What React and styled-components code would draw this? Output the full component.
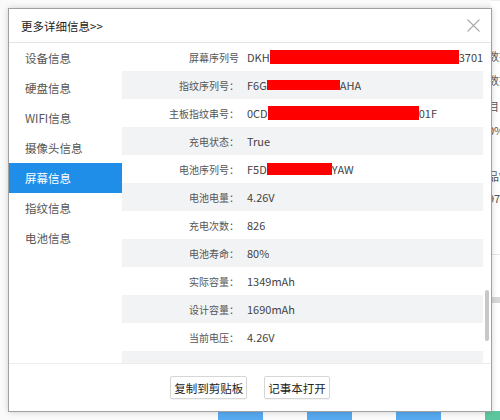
import React from 'react';
import styled, { createGlobalStyle } from 'styled-components';

const Global = createGlobalStyle`
  html, body { margin: 0; padding: 0; background: #fff; }
  body { font-family: "Noto Sans CJK SC", "Noto Sans", sans-serif; }
`;

const Desk = styled.div`
  position: relative;
  width: 500px;
  height: 420px;
  overflow: hidden;
  background: #fafafa;
`;

const SideColumn = styled.div`
  position: absolute;
  top: 0;
  right: 0;
  width: 9px;
  height: 411px;
  display: flex;
  flex-direction: column;
  padding-top: 44px;
  box-sizing: border-box;
  background: #fff;
  border-top: 1px solid #eee;
  overflow: hidden;
`;

const SideText = styled.div`
  height: ${({ h }) => h}px;
  font-size: 11px;
  line-height: ${({ h }) => h}px;
  color: #555;
  white-space: nowrap;
  text-indent: -3px;
`;

const SideRule = styled.div`
  height: ${({ h }) => h || 1}px;
  background: ${({ c }) => c || '#e6e6e6'};
  margin-top: ${({ mt }) => mt}px;
  flex: none;
`;

const Tiles = styled.div`
  position: absolute;
  left: 0;
  bottom: 0;
  width: 500px;
  height: 9px;
  display: flex;
`;

const Tile = styled.div`
  width: ${({ w }) => w}px;
  margin-left: ${({ ml }) => ml}px;
  background: ${({ c }) => c};
`;

const Dialog = styled.div`
  position: absolute;
  left: 8px;
  top: 8px;
  width: 484px;
  height: 404px;
  box-sizing: border-box;
  background: #fff;
  border: 1px solid #a0a0a0;
  box-shadow: 0 0 6px rgba(0, 0, 0, 0.18);
  display: flex;
  flex-direction: column;
`;

const Header = styled.div`
  height: 34px;
  box-sizing: border-box;
  flex: none;
  display: flex;
  align-items: center;
  justify-content: space-between;
  padding: 0 11px 0 12px;
  border-bottom: 1px solid #e4e4e4;
`;

const Title = styled.div`
  font-size: 11.5px;
  color: #222;
`;

const Close = styled.svg`
  width: 13px;
  height: 13px;
`;

const Body = styled.div`
  flex: 1;
  display: flex;
  min-height: 0;
`;

const Menu = styled.div`
  width: 113px;
  flex: none;
  display: flex;
  flex-direction: column;
`;

const MenuItem = styled.div`
  height: 30px;
  line-height: 30px;
  padding-left: 16px;
  font-size: 11.5px;
  color: ${({ active }) => (active ? '#fff' : '#555')};
  background: ${({ active }) => (active ? '#1e8ee8' : 'transparent')};
`;

const Content = styled.div`
  flex: 1;
  display: flex;
  overflow: hidden;
`;

const Rows = styled.div`
  width: 361px;
  flex: none;
  overflow: hidden;
`;

const Row = styled.div`
  height: 28px;
  display: flex;
  align-items: center;
  background: ${({ odd }) => (odd ? '#f2f3f5' : '#fff')};
`;

const Label = styled.div`
  width: 117px;
  flex: none;
  text-align: right;
  font-size: 10px;
  color: #555;
  white-space: nowrap;
`;

const Value = styled.div`
  padding-left: 8px;
  font-size: 11px;
  color: #444;
  white-space: nowrap;
  overflow: hidden;
  display: flex;
  align-items: center;
`;

const Mask = styled.span`
  display: inline-block;
  width: ${({ w }) => w}px;
  height: ${({ h }) => h || 14}px;
  background: #ff0000;
  flex: none;
`;

const Track = styled.div`
  width: 8px;
  flex: none;
  padding-top: 247px;
  box-sizing: border-box;
`;

const Thumb = styled.div`
  width: 4px;
  height: 51px;
  margin-left: 2px;
  border-radius: 2px;
  background: #c8c8c8;
`;

const Footer = styled.div`
  height: 48px;
  flex: none;
  border-top: 1px solid #ededed;
  display: flex;
  justify-content: center;
  align-items: flex-start;
  padding-top: 12px;
  box-sizing: border-box;
  gap: 17px;
`;

const Button = styled.button`
  height: 23px;
  padding: 0 3px;
  font-family: "Noto Sans CJK SC", sans-serif;
  font-size: 11.5px;
  color: #222;
  background: #fff;
  border: 1px solid #d6d6d6;
  border-radius: 2px;
  box-shadow: 0 1px 1px rgba(0, 0, 0, 0.05);
`;

const menu = ['设备信息', '硬盘信息', 'WIFI信息', '摄像头信息', '屏幕信息', '指纹信息', '电池信息'];

const rows = [
  ['屏幕序列号', <>DKH<Mask w={189} />37015</>],
  ['指纹序列号：', <>F6G<Mask w={73} h={10} />AHA</>],
  ['主板指纹串号：', <>0CD<Mask w={151} />01F</>],
  ['充电状态：', 'True'],
  ['电池序列号：', <>F5D<Mask w={65} h={12} />YAW</>],
  ['电池电量：', '4.26V'],
  ['充电次数：', '826'],
  ['电池寿命：', '80%'],
  ['实际容量：', '1349mAh'],
  ['设计容量：', '1690mAh'],
  ['当前电压：', '4.26V'],
  ['', ''],
];

const sideBits = [
  [22, '数据'], [27, '数据'], [25, '目'], [22, '0%'], [25, ':'], [21, '品V'], [22, '97'],
];

export default function App() {
  return (
    <Desk>
      <Global />
      <SideColumn>
        {sideBits.map(([h, t], i) => (
          <SideText key={i} h={h}>{t}</SideText>
        ))}
        <SideRule mt={45} />
        <SideRule mt={42} h={6} c="#d8d8d8" />
      </SideColumn>
      <Tiles>
        <Tile ml={218} w={45} c="#56a8ef" />
        <Tile ml={44} w={45} c="#56a8ef" />
        <Tile ml={44} w={45} c="#56a8ef" />
        <Tile ml={44} w={15} c="#5cc79e" />
      </Tiles>
      <Dialog>
        <Header>
          <Title>更多详细信息&gt;&gt;</Title>
          <Close viewBox="0 0 13 13">
            <path d="M0.5 0.5 L12.5 12.5 M12.5 0.5 L0.5 12.5" stroke="#aaa" strokeWidth="1.1" fill="none" />
          </Close>
        </Header>
        <Body>
          <Menu>
            {menu.map((m) => (
              <MenuItem key={m} active={m === '屏幕信息'}>{m}</MenuItem>
            ))}
          </Menu>
          <Content>
            <Rows>
              {rows.map(([l, v], i) => (
                <Row key={i} odd={i % 2 === 1}>
                  <Label>{l}</Label>
                  <Value>{v}</Value>
                </Row>
              ))}
            </Rows>
            <Track>
              <Thumb />
            </Track>
          </Content>
        </Body>
        <Footer>
          <Button>复制到剪贴板</Button>
          <Button>记事本打开</Button>
        </Footer>
      </Dialog>
    </Desk>
  );
}
